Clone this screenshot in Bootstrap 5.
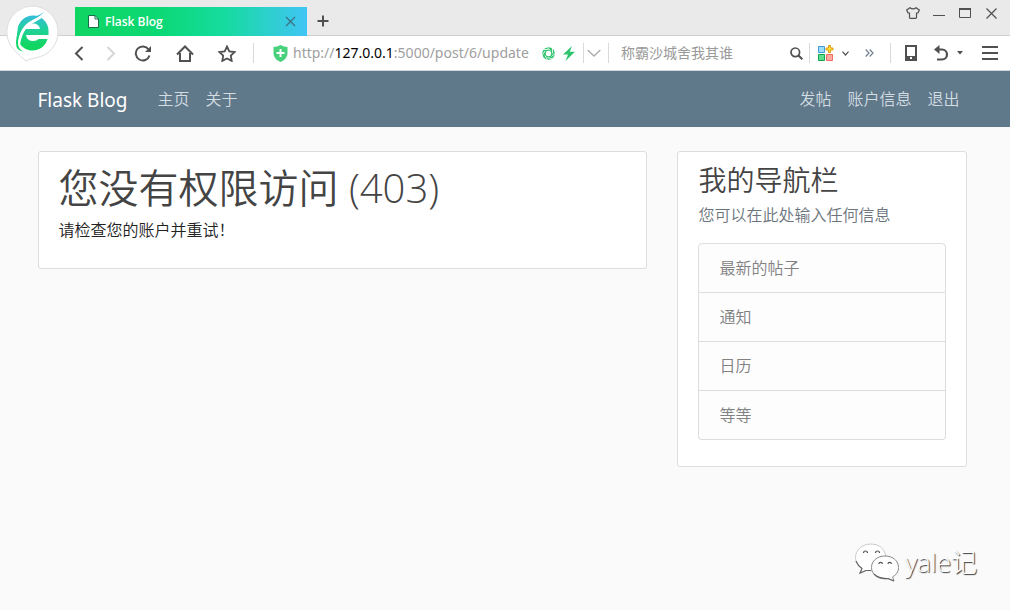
<!DOCTYPE html>
<html lang="zh-CN">
<head>
<meta charset="utf-8">
<meta name="viewport" content="width=device-width, initial-scale=1">
<title>Flask Blog</title>
<link href="https://cdn.jsdelivr.net/npm/bootstrap@5.3.0/dist/css/bootstrap.min.css" rel="stylesheet">
<style>
  body { background: #fafafa; color: #222; font-family: "Open Sans", "Noto Sans CJK SC", sans-serif; font-size: 16px; line-height: 24px; }
  svg { display: block; fill: none; stroke: #505050; stroke-width: 2; flex: none; }

  /* browser frame */
  .tab-strip { height: 36px; background: #eaeaea; border-bottom: 1px solid #cfcfcf; padding-left: 75px; padding-right: 12px; }
  .page-tab { width: 232px; height: 29px; margin-bottom: -1px; padding: 0 11px 0 13px; gap: 6px; background: linear-gradient(90deg, #0fd563 0%, #0cd873 35%, #16dba0 65%, #40c5f5 100%); color: #fff; font-size: 12px; font-weight: 600; }
  .icon-btn { display: flex; align-items: center; justify-content: center; padding: 0; border: 0; background: none; flex: none; }
  .box-sm { width: 14px; height: 20px; }
  .box-md { width: 20px; height: 24px; }
  .new-tab { margin-left: 6px; padding-top: 6px; }
  .window-btns { gap: 12px; padding-top: 3px; }
  .tool-bar { height: 35px; background: #fff; border-bottom: 1px solid #d0d6da; padding-left: 69px; padding-right: 11px; }
  .nav-btns { gap: 12px; }
  .gap-before { margin-left: 10px; }
  .rule { width: 1px; height: 20px; background: #d9d9d9; flex: none; }
  .address { padding-left: 19px; gap: 5px; min-width: 0; }
  .url-text { font-family: "Noto Sans", "Open Sans", sans-serif; font-size: 14px; line-height: 20px; color: #a0a0a0; white-space: nowrap; outline: 0; }
  .url-text b { font-weight: 400; color: #000; }
  .quick-find { width: 200px; padding: 0 6px 0 12px; }
  .quick-find input { width: 100%; min-width: 0; border: 0; padding: 0; background: none; font-family: inherit; font-size: 14px; line-height: 20px; outline: 0; }
  .quick-find input::placeholder { color: #999; opacity: 1; }
  .end-btns { gap: 6px; padding-left: 10px; }
  .end-btns .menu-btn { margin-left: 12px; }
  .browser-logo { position: absolute; left: 5px; top: 5px; z-index: 2; }

  /* site */
  .site { padding-right: 5px; }
  .container { --bs-gutter-x: 30px; }
  .row { --bs-gutter-x: 30px; }
  .bg-steel { background: #5f788a; }
  .navbar { --bs-navbar-nav-link-padding-x: 8px; --bs-navbar-color: #d3dce1; --bs-navbar-hover-color: #fff; --bs-navbar-brand-color: #fff; --bs-navbar-brand-hover-color: #fff; padding: 8px 5px 8px 0; }
  .navbar-brand { font-family: "Noto Sans", sans-serif; font-size: 19px; line-height: 30px; margin-right: 22px; padding: 6px 0 4px; }
  .nav-link, .panel h1, .panel h3, .panel p, .list-group { font-family: "Open Sans", "Noto Sans CJK SC DemiLight", "Noto Sans CJK SC", sans-serif; font-weight: 350; }
  .panel { background: #fff; border: 1px solid #ddd; border-radius: 3px; padding: 10px 20px; margin-bottom: 24px; }
  .panel h1 { font-size: 40px; line-height: 48px; color: #444; margin: 2px 0 6px; }
  .panel h3 { font-size: 28px; line-height: 34px; color: #444; margin: 1px 0 6px; }
  .list-group { --bs-list-group-border-color: #ddd; --bs-list-group-border-radius: 4px; --bs-list-group-bg: #fdfdfd; --bs-list-group-color: #818182; --bs-list-group-item-padding-x: 20px; --bs-list-group-item-padding-y: 12px; }
  .muted { color: #6c757d; }
  .watermark { position: absolute; right: 33px; bottom: 28px; gap: 5px; color: #fff; font-size: 26px; line-height: 36px; font-weight: 300; text-shadow: 1px 1px 1px #333; }
</style>
</head>
<body class="position-relative min-vh-100">

<header class="position-relative">
  <svg class="browser-logo" width="56" height="58" viewBox="0 0 56 58" role="img" aria-label="浏览器">
    <defs><linearGradient id="leaf" gradientUnits="userSpaceOnUse" x1="0" y1="6" x2="0" y2="40"><stop offset="0" stop-color="#3cb4f0"/><stop offset=".5" stop-color="#22d0a0"/><stop offset="1" stop-color="#12d662"/></linearGradient></defs>
    <path d="M27 1a26 26 0 0 1 4 51.700Q25 54 21 56 16 52 10 46A26 26 0 0 1 27 1z" fill="#fff" stroke="#dedede" stroke-width="1"/>
    <path d="M43.500 30V26A15.500 15.500 0 0 0 12.500 26A15.500 15.500 0 0 0 42.500 34H33.500Q32 36 28 36Q22 36 21 30zM21 24Q23 18.500 28 18.500 34 18.500 35 24z" fill="url(#leaf)" stroke="none" fill-rule="evenodd"/>
    <path d="M40 8C33 16 27 15 21.500 21Q15 28 13.500 40" stroke="#fff" stroke-width="3"/>
    <path d="M39.500 6C34 12 27 11 21 15 14 20 11 31 11 38Q11 46 18.500 46.500 12.500 44 13 37 14 26 20.500 18.500C26 13 33 15 39.500 6z" fill="url(#leaf)" stroke="none"/>
  </svg>

  <div class="tab-strip d-flex align-items-end">
    <div class="page-tab d-flex align-items-center">
      <svg width="11" height="13" viewBox="0 0 11 13" stroke="none"><path d="M.5.500H7L10.500 4V12.500H.5z" fill="#fff" stroke="#176f48" stroke-width="1"/><path d="M7 .5V4H10.500" stroke="#176f48" stroke-width="1"/></svg>
      <span class="flex-grow-1">Flask Blog</span>
      <button class="icon-btn" type="button" aria-label="关闭标签页"><svg width="11" height="11" viewBox="0 0 11 11"><path d="M1 1l9 9M10 1l-9 9" stroke="#3b7184" stroke-width="1.300"/></svg></button>
    </div>
    <button class="icon-btn box-md new-tab h-100" type="button" aria-label="新标签页"><svg width="12" height="12" viewBox="0 0 12 12"><path d="M6 .5v11M.5 6h11"/></svg></button>
    <div class="window-btns d-flex align-self-start ms-auto">
      <button class="icon-btn box-sm" type="button" aria-label="皮肤"><svg width="14" height="12" viewBox="0 0 14 12"><path d="M4 .7Q7 3 10 .7L13.300 3 12 6H10.500V10.500Q10.500 11.300 9.700 11.300H4.300Q3.500 11.300 3.500 10.500V6H2L.7 3z" stroke-width="1.200"/></svg></button>
      <button class="icon-btn box-sm" type="button" aria-label="最小化"><svg width="12" height="12" viewBox="0 0 12 12"><path d="M0 8.500h12" stroke-width="1"/></svg></button>
      <button class="icon-btn box-sm" type="button" aria-label="最大化"><svg width="12" height="10" viewBox="0 0 12 10"><path d="M.5 1h11v8.500H.5z" stroke-width="1"/><path d="M0 1h12"/></svg></button>
      <button class="icon-btn box-sm" type="button" aria-label="关闭"><svg width="11" height="11" viewBox="0 0 11 11"><path d="M.5.500l10 10M10.500.500l-10 10" stroke-width="1.200"/></svg></button>
    </div>
  </div>

  <div class="tool-bar d-flex align-items-center">
    <div class="nav-btns d-flex align-items-center me-3">
      <button class="icon-btn box-md" type="button" aria-label="后退"><svg width="10" height="15" viewBox="0 0 10 15"><path d="M8.500 1L2 7.500 8.500 14"/></svg></button>
      <button class="icon-btn box-md" type="button" aria-label="前进"><svg width="10" height="15" viewBox="0 0 10 15"><path d="M1.500 1L8 7.500 1.500 14" stroke="#d6d6d6"/></svg></button>
      <button class="icon-btn box-md" type="button" aria-label="刷新"><svg width="18" height="17" viewBox="0 0 18 17"><path d="M14.600 4.500A7 7 0 1 0 15.500 10.500"/><path d="M17 1v6h-6z" fill="#505050" stroke="none"/></svg></button>
      <button class="icon-btn box-md gap-before" type="button" aria-label="主页"><svg width="18" height="17" viewBox="0 0 18 17"><path d="M1 9.500L9 1.500 17 9.500M4 8v8H14V8"/></svg></button>
      <button class="icon-btn box-md gap-before" type="button" aria-label="收藏"><svg width="18" height="17" viewBox="0 0 18 17"><path d="M9 1.500L11.300 6.300 16.700 7 12.800 10.600 13.700 15.900 9 13.400 4.300 15.900 5.200 10.600 1.300 7 6.700 6.300z" stroke-width="1.800"/></svg></button>
    </div>
    <span class="rule"></span>
    <div class="address d-flex align-items-center flex-grow-1">
      <svg width="15" height="17" viewBox="0 0 15 17"><path d="M7.500 0Q11 2 14.500 2V9Q14 14 7.500 17 1 14 .5 9V2Q4 2 7.500 0z" fill="#47d17b" stroke="none"/><path d="M7.500 4v8M3.500 8h8" stroke="#fff"/></svg>
      <div class="url-text" role="textbox" contenteditable="true" spellcheck="false" aria-label="地址">http://<b>127.0.0.1</b>:5000/post/6/update</div>
      <div class="d-flex align-items-center gap-2 ms-auto me-2">
        <svg width="13" height="13" viewBox="0 0 13 13"><circle cx="6.500" cy="6.500" r="4.500" stroke="#34c573" stroke-width="3.600"/><path d="M4.500 0L8.500 3.500M10.500 1V6.500M13 6.500L9.500 9.500M10.500 12L5.500 10.500M5.500 13L3 8.500M0 8.500L3 4M1.500 2.500L6.500 2.500" stroke="#fff" stroke-width=".8"/></svg>
        <svg width="12" height="15" viewBox="0 0 12 15"><path d="M9 0L0 8.500H5L2.500 15 12 5.800H6.800z" fill="#2ec46f" stroke="none"/></svg>
      </div>
    </div>
    <span class="rule"></span>
    <button class="icon-btn box-md px-1" type="button" aria-label="历史地址"><svg width="14" height="8" viewBox="0 0 14 8"><path d="M.7 1L7 7 13.300 1" stroke="#aaa" stroke-width="1.300"/></svg></button>
    <span class="rule ms-1"></span>
    <form class="quick-find d-flex align-items-center">
      <input type="search" placeholder="称霸沙城舍我其谁" aria-label="搜索">
      <button class="icon-btn" type="button" aria-label="搜索"><svg width="13" height="13" viewBox="0 0 13 13"><circle cx="5.300" cy="5.300" r="4.300" stroke-width="1.700"/><path d="M8.500 8.500L12.300 12.300"/></svg></button>
    </form>
    <span class="rule"></span>
    <button class="icon-btn ms-2" type="button" aria-label="扩展"><svg width="16" height="16" viewBox="0 0 16 16" stroke-width="1"><path d="M.5 1.500h6v6h-6z" fill="#9bdcff" stroke="#3e9dd8" stroke-width="1"/><path d="M.5 9.500h6v6h-6z" fill="#5ce08c" stroke="#16a350" stroke-width="1"/><path d="M8.500 9.500h6v6h-6z" fill="#ffaaa0" stroke="#ee6a62" stroke-width="1"/><path d="M10.500.500h2v2.500h2.500v2h-2.500v2.500h-2V5H8V3h2.500z" fill="#ffe13a" stroke="#dd9c13" stroke-width="1"/></svg></button>
    <button class="icon-btn ms-2" type="button" aria-label="扩展菜单"><svg width="7" height="5" viewBox="0 0 7 5"><path d="M.5.700L3.500 4 6.500.700" stroke-width="1.200"/></svg></button>
    <button class="icon-btn ms-3" type="button" aria-label="更多"><svg width="9" height="8" viewBox="0 0 9 8"><path d="M.7.500L4 4 .7 7.500M4.700.500L8 4 4.700 7.500" stroke="#6f7f90" stroke-width="1.200"/></svg></button>
    <span class="rule ms-3"></span>
    <div class="end-btns d-flex align-items-center">
      <button class="icon-btn box-md" type="button" aria-label="手机"><svg width="12" height="16" viewBox="0 0 12 16"><path d="M1 1h10v14H1z"/><path d="M1 13h10" stroke-width="4"/><path d="M5 13h2" stroke="#fff"/></svg></button>
      <button class="icon-btn box-md ms-1" type="button" aria-label="恢复"><svg width="15" height="16" viewBox="0 0 15 16"><path d="M3 4.500H8A5 5 0 0 1 8 14.500H3" stroke-width="2.200"/><path d="M5.500 0V9L0 4.500z" fill="#505050" stroke="none"/></svg></button>
      <button class="icon-btn" type="button" aria-label="恢复菜单"><svg width="6" height="4" viewBox="0 0 6 4"><path d="M0 0h6L3 3.500z" fill="#505050" stroke="none"/></svg></button>
      <button class="icon-btn menu-btn" type="button" aria-label="菜单"><svg width="18" height="14" viewBox="0 0 18 14"><path d="M1 1h16M1 7h16M1 13h16"/></svg></button>
    </div>
  </div>
</header>

<nav class="navbar navbar-expand bg-steel">
  <div class="container">
    <a class="navbar-brand" href="#">Flask Blog</a>
    <div class="navbar-nav me-auto">
      <a class="nav-link" href="#">主页</a>
      <a class="nav-link" href="#">关于</a>
    </div>
    <div class="navbar-nav">
      <a class="nav-link" href="#">发帖</a>
      <a class="nav-link" href="#">账户信息</a>
      <a class="nav-link" href="#">退出</a>
    </div>
  </div>
</nav>

<main class="site pt-4">
  <div class="container">
    <div class="row">
      <div class="col-8">
        <section class="panel">
          <h1>您没有权限访问 (403)</h1>
          <p>请检查您的账户并重试！</p>
        </section>
      </div>
      <div class="col-4">
        <aside class="panel">
          <h3>我的导航栏</h3>
          <p class="muted mb-3">您可以在此处输入任何信息</p>
          <ul class="list-group mb-3">
            <li class="list-group-item">最新的帖子</li>
            <li class="list-group-item">通知</li>
            <li class="list-group-item">日历</li>
            <li class="list-group-item">等等</li>
          </ul>
        </aside>
      </div>
    </div>
  </div>
</main>

<div class="watermark d-flex align-items-center">
  <svg width="46" height="40" viewBox="0 0 46 40"><g fill="#fff" stroke="#888" stroke-width="1"><path d="M17 2C8 2 1.500 8 1.500 15.500 1.500 20 4 24 8 26.500L6 31 12 28.500Q24 30 30 23 33 18 31.500 12 28 2 17 2z" stroke="#ccc"/><path d="M31 14C23 14 17.500 19 17.500 25.500 17.500 33 25 38 34 36.500L40 39 38.500 35C42 33 44.500 30 44.500 25.500 44.500 19 39 14 31 14z"/></g><path d="M9.500 11a2 2 0 0 1 4 0M21.500 11a2 2 0 0 1 4 0M25 22a1.700 1.700 0 0 1 3.400 0M34 22a1.700 1.700 0 0 1 3.400 0" stroke="#555" stroke-width="1.200"/><path d="M2 19q2 5 6 7.500l-2 4.500 6-2.500h5M20 32q5 5 14 4.500l6 2.500" stroke="#666" stroke-width="1.200"/></svg>
  <span>yale记</span>
</div>

<script src="https://cdn.jsdelivr.net/npm/bootstrap@5.3.0/dist/js/bootstrap.bundle.min.js"></script>
</body>
</html>
